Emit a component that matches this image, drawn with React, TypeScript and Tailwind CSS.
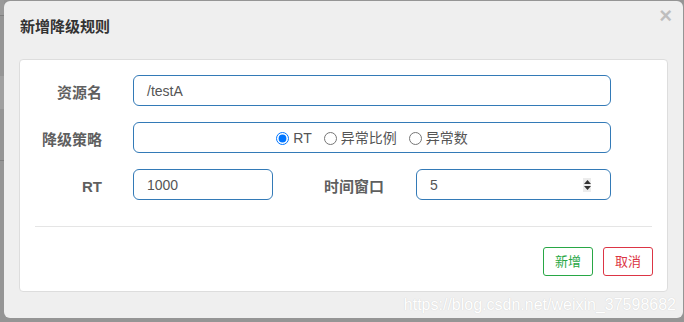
import React from "react";

const font = { fontFamily: '"Liberation Sans", "Noto Sans CJK SC", sans-serif' };

function Label({ children, w = "w-[82px]" }: { children: React.ReactNode; w?: string }) {
  return (
    <div className={`${w} shrink-0 text-right text-[15px] font-bold text-[#5f5f5f] leading-none pt-[4px]`}>{children}</div>
  );
}

function Radio({ checked, label }: { checked?: boolean; label: string }) {
  return (
    <label className="flex items-center gap-[4px] text-[14px] text-[#555]">
      <input type="radio" name="grade" defaultChecked={checked} className="m-0 w-[13px] h-[13px]" />
      <span>{label}</span>
    </label>
  );
}

export default function App() {
  return (
    <div className="w-[684px] h-[322px] bg-[#959595] flex overflow-hidden" style={font}>
      <div className="w-[4px] shrink-0 flex flex-col">
        <div className="h-[15px] bg-[#9a9a9a]" />
        <div className="h-[1px] bg-[#7f7f7f]" />
        <div className="h-[60px] bg-[#959595]" />
        <div className="h-[33px] bg-[#a0a0a0]" />
        <div className="h-[51px] bg-[#959595]" />
        <div className="h-[1px] bg-[#7f7f7f]" />
        <div className="flex-1 bg-[#959595]" />
      </div>
      <div className="flex-1 pt-[1px] pb-[4px] pr-[1px] flex">
        <div className="flex-1 rounded-[6px] bg-[#efefef] flex flex-col relative">
          <div className="h-[58px] shrink-0 flex items-center pl-[16px] pb-[6px]">
            <span className="text-[15px] font-bold text-[#333]">新增降级规则</span>
          </div>
          <span className="absolute right-[11px] top-[4px] text-[22px] font-bold leading-none text-black opacity-20">×</span>
          <div className="mx-[15px] h-[233px] shrink-0 bg-white border border-[#dddddd] rounded-[4px] flex flex-col pt-[15px]">
            <div className="flex items-center h-[31px]">
              <Label>资源名</Label>
              <div className="ml-[31px] w-[478px] h-[31px] border border-[#337ab7] rounded-[6px] flex items-center pl-[13px] pt-[1px] text-[14px] text-[#555]">
                /testA
              </div>
            </div>
            <div className="flex items-center h-[31px] mt-[16px]">
              <Label>降级策略</Label>
              <div className="ml-[31px] w-[478px] h-[31px] border border-[#337ab7] rounded-[6px] flex items-center justify-center gap-[12px] pt-[2px]">
                <Radio checked label="RT" />
                <Radio label="异常比例" />
                <Radio label="异常数" />
              </div>
            </div>
            <div className="flex items-center h-[31px] mt-[16px]">
              <Label>RT</Label>
              <div className="ml-[31px] w-[140px] h-[31px] border border-[#337ab7] rounded-[6px] flex items-center pl-[13px] pt-[1px] text-[14px] text-[#555]">
                1000
              </div>
              <Label w="w-[111px]">时间窗口</Label>
              <div className="ml-[32px] w-[195px] h-[31px] border border-[#337ab7] rounded-[6px] flex items-center pl-[13px] pr-[19px] text-[14px] text-[#555]">
                <span className="flex-1 pt-[1px]">5</span>
                <div className="w-[8px] h-[14px] bg-[#ececec] flex flex-col items-center justify-center gap-[2px]">
                  <svg width="7" height="4" viewBox="0 0 7 4"><path d="M0 4 L3.5 0 L7 4 Z" fill="#333" /></svg>
                  <svg width="7" height="4" viewBox="0 0 7 4"><path d="M0 0 L3.5 4 L7 0 Z" fill="#333" /></svg>
                </div>
              </div>
            </div>
            <div className="mx-[15px] mt-[26px] h-[1px] bg-[#e5e5e5]" />
            <div className="flex justify-end gap-[10px] mt-[20px] pr-[14px]">
              <button className="w-[50px] h-[29px] border border-[#28a745] rounded-[3px] text-[13px] text-[#28a745] bg-white">新增</button>
              <button className="w-[50px] h-[29px] border border-[#dc3545] rounded-[3px] text-[13px] text-[#dc3545] bg-white">取消</button>
            </div>
          </div>
          <div className="flex-1 flex justify-end items-center pr-[7px] pb-[1px]">
            <span className="text-[16px] text-white leading-none [text-shadow:0_0_1px_#c8c8c8]">https://blog.csdn.net/weixin_37598682</span>
          </div>
        </div>
      </div>
    </div>
  );
}
